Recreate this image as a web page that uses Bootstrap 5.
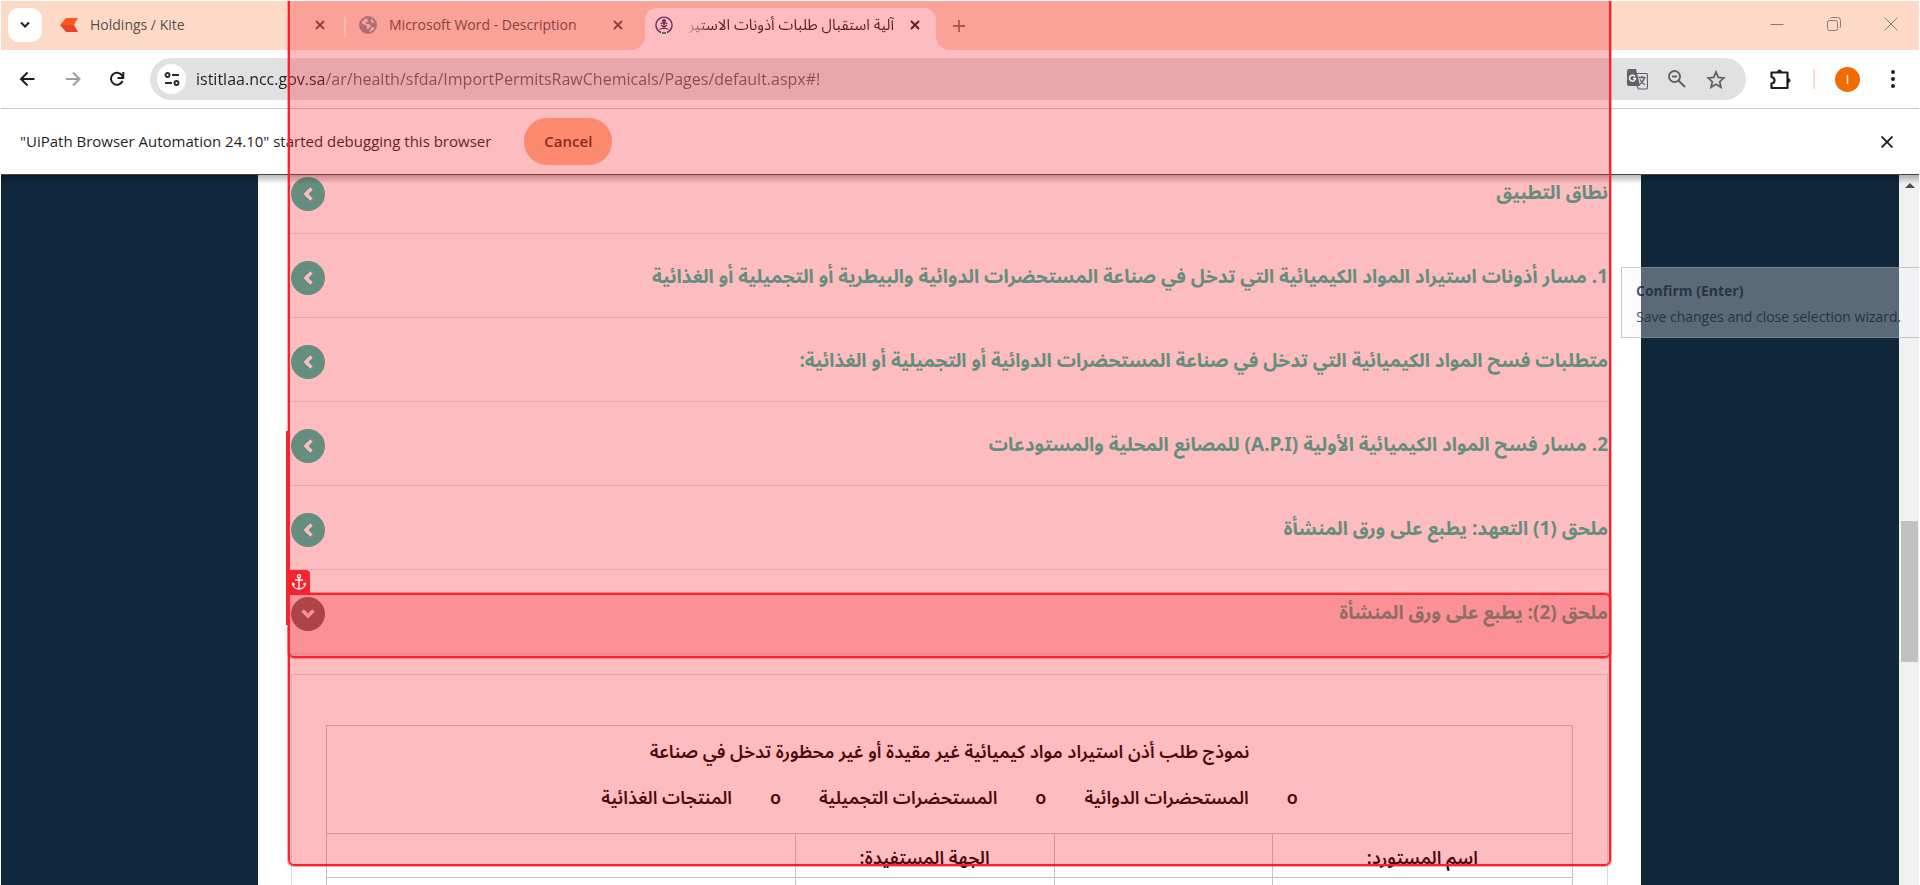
<!DOCTYPE html>
<html lang="en">
<head>
<meta charset="utf-8">
<title>آلية استقبال طلبات أذونات الاستيراد</title>
<meta name="viewport" content="width=device-width, initial-scale=1">
<link href="https://cdn.jsdelivr.net/npm/bootstrap@5.3.0/dist/css/bootstrap.min.css" rel="stylesheet">
<style>
  :root { --pick: #f9222f; --pick-fill: rgba(248, 33, 43, .3); --teal: #24bda1; }
  body { font-family: "Open Sans", "Noto Sans", sans-serif; font-size: 15px; color: #1f1f1f; background: #fff; }
  button { border: 0; background: transparent; padding: 0; color: inherit; }
  svg { display: block; flex: none; }
  .browser { height: 100vh; border: 1px solid #fff; border-bottom: 0; }
  .tabstrip { height: 49px; background: #fddac8; padding-left: 7px; }
  .tab-search { width: 34px; height: 34px; border-radius: 11px; background: #fff; margin: 7px 18px 0 0; }
  .tab { height: 42px; margin-top: 7px; padding-bottom: 8px; color: #57504c; }
  .tab-one { width: 284px; padding-right: 19px; }
  .tab-two { width: 299px; padding: 0 22px 8px 13px; }
  .tab-live { width: 291px; background: #fff; border-radius: 12px 12px 0 0; color: #1f1f1f; padding: 0 16px 8px 10px; position: relative; }
  .tab-live::before, .tab-live::after { content: ""; position: absolute; bottom: 0; width: 14px; height: 14px; }
  .tab-live::before { left: -14px; background: radial-gradient(circle at 0 0, transparent 14px, #fff 14px); }
  .tab-live::after { right: -14px; background: radial-gradient(circle at 100% 0, transparent 14px, #fff 14px); }
  .tab-title { font-size: 14px; line-height: 20px; }
  .tab-fade { font-family: "Noto Sans Arabic", "DejaVu Sans", sans-serif; font-size: 15px; line-height: 28px; -webkit-mask-image: linear-gradient(to right, transparent, #000 30px); mask-image: linear-gradient(to right, transparent, #000 30px); }
  .tab-sep { width: 2px; height: 20px; background: #fff; opacity: .8; margin-top: 16px; }
  .win-controls { gap: 43px; padding: 0 21px 3px 0; color: #8b7a70; }
  .toolbar { height: 59px; border-bottom: 1px solid #c9c9c9; padding: 0 17px 0 18px; }
  .omnibox { height: 42px; border-radius: 21px; background: #e1e1e1; margin: 0 24px 0 25px; padding: 0 20px 0 7px; }
  .site-info { width: 29px; height: 30px; border-radius: 15px; background: #fff; }
  .url { border: 0; outline: 0; padding: 0; margin-left: 10px; font-size: 16px; line-height: 24px; color: transparent; background: linear-gradient(to right, #1f1f1f 130px, #5f5f5f 130px); -webkit-background-clip: text; background-clip: text; }
  .avatar { width: 25px; height: 25px; border-radius: 50%; background: #ef6c00; color: #fff; font-size: 13px; line-height: 25px; }
  .tool-sep { width: 2px; height: 20px; background: #fddac8; margin: 0 20px 0 22px; }
  .infobar { height: 66px; border-bottom: 1px solid #53443a; padding: 0 26px 0 19px; }
  .btn-cancel { width: 88px; height: 47px; border-radius: 23px; background: #ffb78d; color: #5b3018; font-weight: 600; margin-left: 33px; }
  .viewport { background: linear-gradient(to right, #10273d, #0f263b); min-height: 0; }
  .viewport::before { content: ""; position: absolute; z-index: 1; left: 0; right: 0; top: 0; height: 9px; background: linear-gradient(rgba(0,0,0,.28), transparent); }
  .side { width: 257px; }
  .side-end { width: 258px; }
  .page { background: #fff; padding: 0 33px; font-family: "Noto Sans Arabic", "DejaVu Sans", sans-serif; }
  .topic { height: 84px; padding-top: 27px; border-bottom: 1px dotted #c8c8c8; }
  .topic:first-child { height: 59px; padding-top: 2px; }
  .topic-title { color: var(--teal); font-size: 19px; line-height: 32px; font-weight: 700; }
  .round { width: 34px; height: 34px; border-radius: 50%; background: var(--teal); color: #fff; }
  .round-open { background: #676866; }
  .panel { margin-top: 20px; border: 1px solid #ddd; border-bottom: 0; padding: 50px 34px 0; height: 400px; }
  .form-grid { width: 100%; table-layout: fixed; font-size: 18px; font-weight: 600; color: #000; text-align: center; }
  .form-grid td, .form-grid th { border: 1px solid #c4c4c4; height: 44px; line-height: 24px; padding-top: 5px; }
  .form-grid thead th { height: 108px; vertical-align: top; padding-top: 14px; font-weight: 600; }
  .choices { margin-top: 22px; gap: 38px; }
  .choices span { display: inline-flex; gap: 38px; }
  .scroller { width: 20px; background: #f1f1f1; padding: 8px 1px 0 2px; }
  .scroller-thumb { height: 141px; width: 17px; background: #c1c1c1; margin-top: 333px; }
  .pick-area { left: 287px; right: 308px; border: 2px solid var(--pick); background: var(--pick-fill); box-shadow: 0 0 0 1px rgba(249, 34, 47, .4); pointer-events: none; z-index: 5; }
  .pick-outer { top: -4px; height: 869px; border-radius: 0 6px 6px 6px; }
  .pick-inner { top: 592px; height: 65px; border-radius: 0 6px 6px 6px; background: rgba(248, 33, 43, .28); }
  .pick-rail { left: 285px; top: 430px; width: 3px; height: 194px; background: var(--pick); z-index: 6; }
  .pick-anchor { left: 287px; top: 569px; width: 22px; height: 23px; background: var(--pick); border-radius: 0 4px 0 0; color: #fff; z-index: 6; }
  .hint { right: 0; top: 266px; width: 298px; height: 71px; border: 1px solid rgba(150,150,150,.5); border-right: 0; background: rgba(242,245,249,.33); padding: 10px 0 0 14px; color: rgba(22,32,50,.75); z-index: 6; font-size: 14px; line-height: 26px; }
</style>
</head>
<body>
<div class="browser d-flex flex-column position-relative overflow-hidden">

  <div class="tabstrip d-flex flex-shrink-0">
    <button class="tab-search d-flex align-items-center justify-content-center" aria-label="Search tabs"><svg width="10" height="8" viewBox="0 0 10 8" fill="none" stroke="currentColor" stroke-width="2"><path d="M1 1.500 5 5.500 9 1.500"/></svg></button>
    <div class="tab tab-one d-flex align-items-center">
      <svg width="18" height="14" viewBox="0 0 18 14"><path d="M6 0h12l-4 7H0z" fill="#ff5722"/><path d="M0 7h14l4 7H6z" fill="#e8432d"/></svg>
      <span class="tab-title flex-grow-1 ms-2 ps-1">Holdings / Kite</span>
      <button aria-label="Close tab"><svg width="10" height="10" viewBox="0 0 10 10" stroke="currentColor" stroke-width="1.800"><path d="M1 1l8 8M9 1l-8 8"/></svg></button>
    </div>
    <div class="tab-sep"></div>
    <div class="tab tab-two d-flex align-items-center">
      <svg width="18" height="18" viewBox="0 0 18 18"><circle cx="9" cy="9" r="9" fill="#8f9198"/><path d="M8 2c-3 1-5 3-5.500 6 2 .5 4 0 5 2 .5 1.500-.5 3 1 3 2 0 1.500-2 3.500-3l-2-2H7V6h2zM12 3v3l3 1c0-2-1-3-3-4zM13 11l-3 5c3-.5 5-2 5.500-4z" fill="#fddac8"/></svg>
      <span class="tab-title flex-grow-1 ms-2 ps-1 text-nowrap">Microsoft Word - Description</span>
      <button aria-label="Close tab"><svg width="10" height="10" viewBox="0 0 10 10" stroke="currentColor" stroke-width="1.800"><path d="M1 1l8 8M9 1l-8 8"/></svg></button>
    </div>
    <div class="tab tab-live d-flex align-items-center">
      <svg width="18" height="18" viewBox="0 0 18 18" fill="none" stroke="#31406f"><path d="M6 16.500A8 8 0 1 1 12 16.500" stroke-width="1.400"/><circle cx="9" cy="5" r="1.500" fill="#31406f"/><path d="M9 6v6M5.500 7.500c1.500-1 2.500-.5 3.500 1 1-1.500 2-2 3.500-1M4.500 13.500C8 12.500 10 11 12 9M13.500 13.500C10 12.500 8 11 6 9" stroke-width="1.200"/><path d="M7 17h4" stroke="#18935a" stroke-width="2"/></svg>
      <span class="tab-title tab-fade flex-fill text-nowrap overflow-hidden ms-2 me-3" dir="rtl">آلية استقبال طلبات أذونات الاستير</span>
      <button aria-label="Close tab"><svg width="10" height="10" viewBox="0 0 10 10" stroke="currentColor" stroke-width="2"><path d="M1 1l8 8M9 1l-8 8"/></svg></button>
    </div>
    <button class="ms-3" aria-label="New tab"><svg width="14" height="14" viewBox="0 0 14 14" stroke="#8b6a5c" stroke-width="1.800"><path d="M7 1v12M1 7h12"/></svg></button>
    <div class="win-controls d-flex align-items-center ms-auto">
      <button aria-label="Minimize"><svg width="14" height="14" viewBox="0 0 14 14" stroke="currentColor"><path d="M.5 7.500h13"/></svg></button>
      <button aria-label="Restore"><svg width="14" height="14" viewBox="0 0 14 14" fill="none" stroke="currentColor"><rect x=".5" y="3.500" width="10" height="10" rx="2"/><path d="M3 1.500Q3.500.5 5 .5h5.500q3 0 3 3V9q0 1.500-1 2"/></svg></button>
      <button aria-label="Close window"><svg width="14" height="14" viewBox="0 0 14 14" stroke="currentColor"><path d="M.5.5l13 13M13.500.5l-13 13"/></svg></button>
    </div>
  </div>

  <div class="toolbar d-flex align-items-center flex-shrink-0">
    <button aria-label="Back"><svg width="18" height="16" viewBox="0 0 18 16" fill="none" stroke="#1f1f1f" stroke-width="2"><path d="M15.500 8H3M8.500 1.500 2 8l6.500 6.500"/></svg></button>
    <button class="ms-4 ps-1" aria-label="Forward"><svg width="16" height="16" viewBox="0 0 16 16" fill="none" stroke="#9d9d9d" stroke-width="2"><path d="M1 8h13M8 1.500 14.500 8 8 14.500"/></svg></button>
    <button class="ms-4 ps-1" aria-label="Reload"><svg width="16" height="16" viewBox="0 0 16 16" fill="none" stroke="#1f1f1f" stroke-width="2"><path d="M13.500 10A6 6 0 1 1 13 4.500L14 6"/><path d="M14.300 1v6H8.500"/></svg></button>
    <div class="omnibox d-flex align-items-center flex-grow-1">
      <button class="site-info d-flex align-items-center justify-content-center" aria-label="Site information"><svg width="16" height="14" viewBox="0 0 16 14" fill="none" stroke="#2b2b2b" stroke-width="1.900"><circle cx="3.500" cy="3" r="2"/><path d="M8 3h7M1 11h7"/><circle cx="12.500" cy="11" r="2"/></svg></button>
      <input class="url flex-grow-1" type="text" aria-label="Address" value="istitlaa.ncc.gov.sa/ar/health/sfda/ImportPermitsRawChemicals/Pages/default.aspx#!">
      <button aria-label="Translate"><svg width="21" height="21" viewBox="0 0 21 21"><path d="M2 0h7l4 17H2q-2 0-2-2V2q0-2 2-2z" fill="#5f6368"/><path d="M8 7.500A3 3 0 1 0 8.500 9.500H6" fill="none" stroke="#fff" stroke-width="1.400"/><path d="M10 4.500h9q1.500 0 1.500 1.500v12.500q0 1.500-1.500 1.500h-7.500L10 17" fill="none" stroke="#5f6368" stroke-width="1.200"/><path d="M11.500 8.500h7M15 7v1.500M17.500 8.500q-1.500 5-5 7M13 10.500q2 4 5 5.500" fill="none" stroke="#5f6368" stroke-width="1.300"/></svg></button>
      <button class="ms-3 ps-1" aria-label="Zoom"><svg width="18" height="18" viewBox="0 0 18 18" fill="none" stroke="#5f6368" stroke-width="2"><circle cx="6.500" cy="6.500" r="5.500"/><path d="M10.500 10.500l6.500 6.500M4 6.500h5"/></svg></button>
      <button class="ms-3 ps-1" aria-label="Bookmark"><svg width="20" height="19" viewBox="0 0 20 19" fill="none" stroke="#5f6368" stroke-width="1.800"><path d="M10 2l2.300 5.400 5.700.5-4.300 3.800 1.300 5.600-5-3-5 3 1.300-5.600L2 7.900l5.700-.5z"/></svg></button>
    </div>
    <button aria-label="Extensions"><svg width="21" height="21" viewBox="0 0 21 21" fill="none" stroke="#1f1f1f" stroke-width="2.200" stroke-linejoin="round"><path d="M1.500 3.500h16v15.500h-16v-4.500q3-.5 3-3.200t-3-3.300z"/><path d="M7.500 3a2 2 0 0 1 4 0zM18 9.500a2 2 0 0 1 0 4z" fill="#1f1f1f" stroke-width="1"/></svg></button>
    <div class="tool-sep"></div>
    <button class="avatar text-center" aria-label="Profile">I</button>
    <button class="ms-4" aria-label="Menu"><svg width="18" height="18" viewBox="0 0 18 18" fill="#1f1f1f"><circle cx="9" cy="2" r="2"/><circle cx="9" cy="9" r="2"/><circle cx="9" cy="16" r="2"/></svg></button>
  </div>

  <div class="infobar d-flex align-items-center flex-shrink-0">
    <span class="text-nowrap">"UiPath Browser Automation 24.10" started debugging this browser</span>
    <button class="btn-cancel">Cancel</button>
    <button class="ms-auto" aria-label="Dismiss"><svg width="12" height="12" viewBox="0 0 12 12" stroke="#1f1f1f" stroke-width="1.800"><path d="M.5.5l11 11M11.500.5l-11 11"/></svg></button>
  </div>

  <div class="viewport d-flex flex-grow-1 position-relative overflow-hidden">
    <div class="side flex-shrink-0"></div>
    <main class="page flex-grow-1" dir="rtl" lang="ar">
      <div class="topic d-flex justify-content-between align-items-start"><a href="#" class="topic-title text-decoration-none">نطاق التطبيق</a><button class="round d-flex align-items-center justify-content-center" aria-label="عرض"><svg width="10" height="14" viewBox="0 0 10 14" fill="none" stroke="#fff" stroke-width="3.500"><path d="M8.500 1.500 3 7l5.500 5.500"/></svg></button></div>
      <div class="topic d-flex justify-content-between align-items-start"><a href="#" class="topic-title text-decoration-none">1. مسار أذونات استيراد المواد الكيميائية التي تدخل في صناعة المستحضرات الدوائية والبيطرية أو التجميلية أو الغذائية</a><button class="round d-flex align-items-center justify-content-center" aria-label="عرض"><svg width="10" height="14" viewBox="0 0 10 14" fill="none" stroke="#fff" stroke-width="3.500"><path d="M8.500 1.500 3 7l5.500 5.500"/></svg></button></div>
      <div class="topic d-flex justify-content-between align-items-start"><a href="#" class="topic-title text-decoration-none">متطلبات فسح المواد الكيميائية التي تدخل في صناعة المستحضرات الدوائية أو التجميلية أو الغذائية:</a><button class="round d-flex align-items-center justify-content-center" aria-label="عرض"><svg width="10" height="14" viewBox="0 0 10 14" fill="none" stroke="#fff" stroke-width="3.500"><path d="M8.500 1.500 3 7l5.500 5.500"/></svg></button></div>
      <div class="topic d-flex justify-content-between align-items-start"><a href="#" class="topic-title text-decoration-none">2. مسار فسح المواد الكيميائية الأولية (A.P.I) للمصانع المحلية والمستودعات</a><button class="round d-flex align-items-center justify-content-center" aria-label="عرض"><svg width="10" height="14" viewBox="0 0 10 14" fill="none" stroke="#fff" stroke-width="3.500"><path d="M8.500 1.500 3 7l5.500 5.500"/></svg></button></div>
      <div class="topic d-flex justify-content-between align-items-start"><a href="#" class="topic-title text-decoration-none">ملحق (1) التعهد: يطبع على ورق المنشأة</a><button class="round d-flex align-items-center justify-content-center" aria-label="عرض"><svg width="10" height="14" viewBox="0 0 10 14" fill="none" stroke="#fff" stroke-width="3.500"><path d="M8.500 1.500 3 7l5.500 5.500"/></svg></button></div>
      <div class="topic d-flex justify-content-between align-items-start"><a href="#" class="topic-title text-decoration-none">ملحق (2): يطبع على ورق المنشأة</a><button class="round round-open d-flex align-items-center justify-content-center" aria-label="إخفاء"><svg width="14" height="10" viewBox="0 0 14 10" fill="none" stroke="#fff" stroke-width="3.500"><path d="M1.500 1.500 7 7l5.500-5.500"/></svg></button></div>
      <section class="panel">
        <table class="form-grid">
          <colgroup><col style="width:24.1%"><col style="width:17.5%"><col style="width:20.8%"><col style="width:37.6%"></colgroup>
          <thead><tr><th colspan="4">نموذج طلب أذن استيراد مواد كيميائية غير مقيدة أو غير محظورة تدخل في صناعة
            <div class="choices d-flex justify-content-center"><span><i class="fst-normal">o</i>المستحضرات الدوائية</span><span><i class="fst-normal">o</i>المستحضرات التجميلية</span><span><i class="fst-normal">o</i>المنتجات الغذائية</span></div></th></tr></thead>
          <tbody>
            <tr><td>اسم المستورد:</td><td></td><td>الجهة المستفيدة:</td><td></td></tr>
            <tr><td></td><td></td><td></td><td></td></tr>
          </tbody>
        </table>
      </section>
    </main>
    <div class="side side-end flex-shrink-0"></div>
    <div class="scroller flex-shrink-0"><svg class="mx-auto" width="10" height="5" viewBox="0 0 10 5"><path d="M5 0l5 5H0z" fill="#4f4f4f"/></svg><div class="scroller-thumb"></div></div>
  </div>

  <div class="pick-area pick-outer position-absolute"></div>
  <div class="pick-area pick-inner position-absolute"></div>
  <div class="pick-rail position-absolute"></div>
  <div class="pick-anchor position-absolute d-flex align-items-center justify-content-center"><svg width="14" height="16" viewBox="0 0 14 16" fill="none" stroke="#fff" stroke-width="1.300"><circle cx="7" cy="2.200" r="1.600"/><path d="M7 4v11M3 6h8M.8 9.500C1 13 4 15 7 15s6-2 6.200-5.500M.3 11.300l.6-2 1.800 1.200M13.700 11.300l-.6-2-1.800 1.200"/></svg></div>
  <div class="hint position-absolute text-nowrap" role="tooltip"><div class="fw-bold">Confirm (Enter)</div><div>Save changes and close selection wizard.</div></div>
</div>
<script src="https://cdn.jsdelivr.net/npm/bootstrap@5.3.0/dist/js/bootstrap.bundle.min.js"></script>
</body>
</html>
